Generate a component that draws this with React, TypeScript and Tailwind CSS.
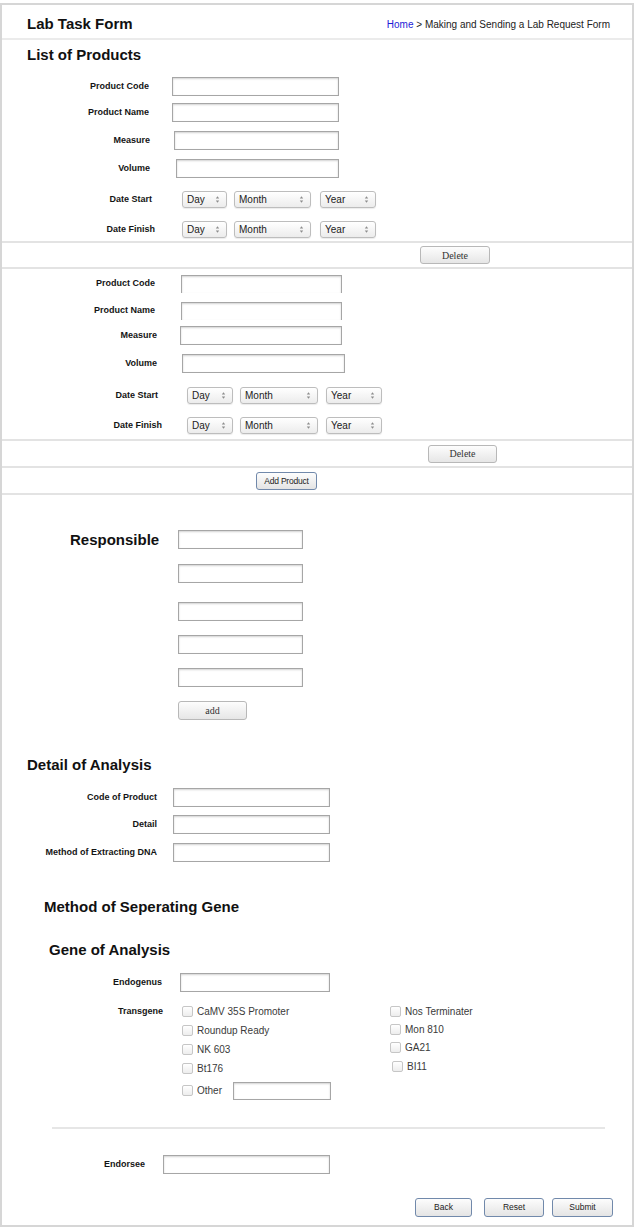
import React from "react";

const sans = "font-['Liberation_Sans',Arial,Helvetica,sans-serif]";
const serif = "font-['Liberation_Serif','Times_New_Roman',serif]";

function TextBox({ className = "" }: { className?: string }) {
  return (
    <input
      type="text"
      className={`block shrink-0 border border-[#a6a6a6] bg-white shadow-[inset_0_1px_2px_rgba(0,0,0,0.18)] outline-none ${className}`}
    />
  );
}

function UpDown() {
  return (
    <svg width="5" height="9" viewBox="0 0 5 9" className="shrink-0">
      <path d="M0.8 3.6 L2.5 1.2 L4.2 3.6Z M0.8 5.4 L2.5 7.8 L4.2 5.4Z" fill="#8c8c8c" />
    </svg>
  );
}

function Picker({ text, className }: { text: string; className: string }) {
  return (
    <div
      className={`flex h-[17px] shrink-0 items-center justify-between rounded-[3px] border border-[#bdbdbd] bg-linear-to-b from-white to-[#ececec] pl-[4px] pr-[6px] text-[10px] text-[#222] shadow-[0_1px_1px_rgba(0,0,0,0.08)] ${className}`}
    >
      <span>{text}</span>
      <UpDown />
    </div>
  );
}

function Label({ text, className }: { text: string; className: string }) {
  return <span className={`shrink-0 text-right text-[9px] font-bold text-[#141414] ${className}`}>{text}</span>;
}

function Check({ label, className = "" }: { label: string; className?: string }) {
  return (
    <label className={`flex h-[19px] items-center text-[10px] text-[#3a3a3a] ${className}`}>
      <input
        type="checkbox"
        className="m-0 h-[11px] w-[11px] shrink-0 appearance-none rounded-[2px] border border-[#c6c6c6] bg-linear-to-b from-white to-[#ededed]"
      />
      <span className="ml-[4px]">{label}</span>
    </label>
  );
}

const greyBtn = `rounded-[3px] border border-[#b8b8b8] bg-linear-to-b from-[#fdfdfd] to-[#e6e6e6] text-[10px] text-[#333] ${serif}`;
const blueBtn = `rounded-[3px] border border-[#7189ab] bg-linear-to-b from-[#fdfdfd] to-[#e4e4e4] text-[8.5px] text-[#222] ${sans}`;

export default function App() {
  return (
    <div className={`w-[636px] bg-white pt-[3px] ${sans}`}>
      <div className="w-[634px] border-2 border-[#d6d6d6] bg-white">
        {/* header */}
        <div className="flex h-[35px] items-center justify-between border-b-2 border-[#ebebeb] pl-[25px] pr-[22px] pt-[5px]">
          <h1 className="text-[15px] font-bold text-[#111]">Lab Task Form</h1>
          <div className="text-[10px] text-[#222]">
            <a className="text-[#1c1cd6]">Home</a> &gt; Making and Sending a Lab Request Form
          </div>
        </div>

        {/* product 1 */}
        <div className="border-b-2 border-[#e3e3e3] pb-[3px]">
          <h2 className="flex h-[30px] items-center pl-[25px] text-[15px] font-bold text-[#111]">List of Products</h2>
          <div className="mt-[7px] flex h-[19px] items-center">
            <Label text="Product Code" className="w-[147px]" />
            <TextBox className="ml-[23px] h-[19px] w-[167px]" />
          </div>
          <div className="mt-[7px] flex h-[19px] items-center">
            <Label text="Product Name" className="w-[147px]" />
            <TextBox className="ml-[23px] h-[19px] w-[167px]" />
          </div>
          <div className="mt-[9px] flex h-[19px] items-center">
            <Label text="Measure" className="w-[148px]" />
            <TextBox className="ml-[24px] h-[19px] w-[165px]" />
          </div>
          <div className="mt-[9px] flex h-[19px] items-center">
            <Label text="Volume" className="w-[148px]" />
            <TextBox className="ml-[26px] h-[19px] w-[163px]" />
          </div>
          <div className="mt-[13px] flex h-[17px] items-center">
            <Label text="Date Start" className="w-[150px]" />
            <Picker text="Day" className="ml-[30px] w-[45px]" />
            <Picker text="Month" className="ml-[7px] w-[77px]" />
            <Picker text="Year" className="ml-[9px] w-[56px]" />
          </div>
          <div className="mt-[13px] flex h-[17px] items-center">
            <Label text="Date Finish" className="w-[153px]" />
            <Picker text="Day" className="ml-[27px] w-[45px]" />
            <Picker text="Month" className="ml-[7px] w-[77px]" />
            <Picker text="Year" className="ml-[9px] w-[56px]" />
          </div>
        </div>
        <div className="flex h-[26px] items-center border-b-2 border-[#e3e3e3] pl-[418px]">
          <button className={`h-[18px] w-[70px] ${greyBtn}`}>Delete</button>
        </div>

        {/* product 2 */}
        <div className="border-b-2 border-[#e3e3e3] pb-[5px]">
          <div className="mt-[6px] flex h-[18px] items-center">
            <Label text="Product Code" className="w-[153px]" />
            <TextBox className="ml-[26px] h-[18px] w-[161px] border-b-0" />
          </div>
          <div className="mt-[9px] flex h-[18px] items-center">
            <Label text="Product Name" className="w-[153px]" />
            <TextBox className="ml-[26px] h-[18px] w-[161px] border-b-0" />
          </div>
          <div className="mt-[6px] flex h-[19px] items-center">
            <Label text="Measure" className="w-[155px]" />
            <TextBox className="ml-[23px] h-[19px] w-[162px]" />
          </div>
          <div className="mt-[9px] flex h-[19px] items-center">
            <Label text="Volume" className="w-[155px]" />
            <TextBox className="ml-[25px] h-[19px] w-[163px]" />
          </div>
          <div className="mt-[14px] flex h-[17px] items-center">
            <Label text="Date Start" className="w-[156px]" />
            <Picker text="Day" className="ml-[29px] w-[46px]" />
            <Picker text="Month" className="ml-[7px] w-[78px]" />
            <Picker text="Year" className="ml-[8px] w-[56px]" />
          </div>
          <div className="mt-[13px] flex h-[17px] items-center">
            <Label text="Date Finish" className="w-[160px]" />
            <Picker text="Day" className="ml-[25px] w-[46px]" />
            <Picker text="Month" className="ml-[7px] w-[78px]" />
            <Picker text="Year" className="ml-[8px] w-[56px]" />
          </div>
        </div>
        <div className="flex h-[27px] items-center border-b-2 border-[#e3e3e3] pl-[426px]">
          <button className={`h-[18px] w-[69px] ${greyBtn}`}>Delete</button>
        </div>
        <div className="flex h-[27px] items-center border-b-2 border-[#e3e3e3] pl-[254px] pt-[1px]">
          <button className={`h-[18px] w-[61px] rounded-[2px] tracking-[-0.2px] ${blueBtn}`}>Add Product</button>
        </div>

        {/* responsible */}
        <div className="mt-[35px] flex items-start pl-[68px]">
          <h2 className="h-[19px] w-[108px] text-[15px] font-bold leading-[19px] text-[#111]">Responsible</h2>
          <div className="flex flex-col">
            <TextBox className="h-[19px] w-[125px]" />
            <TextBox className="mt-[15px] h-[19px] w-[125px]" />
            <TextBox className="mt-[19px] h-[19px] w-[125px]" />
            <TextBox className="mt-[14px] h-[19px] w-[125px]" />
            <TextBox className="mt-[14px] h-[19px] w-[125px]" />
            <button className={`mt-[14px] h-[19px] w-[69px] ${greyBtn}`}>add</button>
          </div>
        </div>

        {/* detail of analysis */}
        <h2 className="mt-[35px] flex h-[20px] items-center pl-[25px] text-[15px] font-bold text-[#111]">Detail of Analysis</h2>
        <div className="mt-[13px] flex h-[19px] items-center">
          <Label text="Code of Product" className="w-[155px]" />
          <TextBox className="ml-[16px] h-[19px] w-[157px]" />
        </div>
        <div className="mt-[8px] flex h-[19px] items-center">
          <Label text="Detail" className="w-[155px]" />
          <TextBox className="ml-[16px] h-[19px] w-[157px]" />
        </div>
        <div className="mt-[9px] flex h-[19px] items-center">
          <Label text="Method of Extracting DNA" className="w-[155px]" />
          <TextBox className="ml-[16px] h-[19px] w-[157px]" />
        </div>

        <h2 className="mt-[35px] flex h-[20px] items-center pl-[42px] text-[15px] font-bold text-[#111]">Method of Seperating Gene</h2>
        <h2 className="mt-[23px] flex h-[20px] items-center pl-[47px] text-[15px] font-bold text-[#111]">Gene of Analysis</h2>

        <div className="mt-[13px] flex h-[19px] items-center">
          <Label text="Endogenus" className="w-[160px]" />
          <TextBox className="ml-[18px] h-[19px] w-[150px]" />
        </div>

        <div className="mt-[10px] flex items-start">
          <Label text="Transgene" className="h-[19px] w-[161px] leading-[19px]" />
          <div className="ml-[19px] grid grid-cols-[208px_1fr]">
            <div className="flex flex-col">
              <Check label="CaMV 35S Promoter" />
              <Check label="Roundup Ready" />
              <Check label="NK 603" />
              <Check label="Bt176" />
              <div className="mt-[3px] flex h-[19px] items-center">
                <Check label="Other" />
                <TextBox className="ml-[11px] h-[18px] w-[98px]" />
              </div>
            </div>
            <div className="flex flex-col">
              <Check label="Nos Terminater" />
              <Check label="Mon 810" className="-mt-[1px]" />
              <Check label="GA21" className="-mt-[1px]" />
              <Check label="BI11" className="pl-[2px]" />
            </div>
          </div>
        </div>

        <div className="ml-[50px] mt-[27px] h-[2px] w-[553px] bg-[#e6e6e6]" />

        <div className="mt-[26px] flex h-[19px] items-center">
          <Label text="Endorsee" className="w-[143px]" />
          <TextBox className="ml-[18px] h-[19px] w-[167px]" />
        </div>

        <div className="mt-[24px] flex items-center pb-[8px] pl-[413px]">
          <button className={`h-[19px] w-[57px] ${blueBtn}`}>Back</button>
          <button className={`ml-[12px] h-[19px] w-[60px] ${blueBtn}`}>Reset</button>
          <button className={`ml-[8px] h-[19px] w-[61px] ${blueBtn}`}>Submit</button>
        </div>
      </div>
    </div>
  );
}
